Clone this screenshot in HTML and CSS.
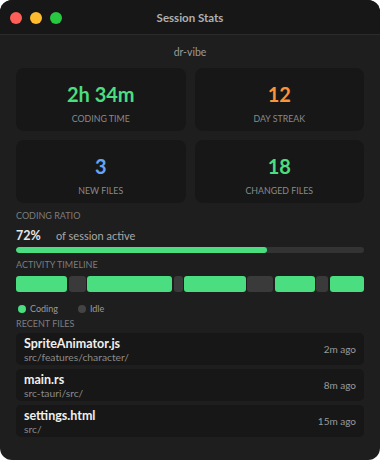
FILE: index.html
```html
<!DOCTYPE html>
<html>
<head>
<meta charset="utf-8">
<link rel="stylesheet" href="styles.css">
</head>
<body>
<div class="window">
  <div class="titlebar">
    <div class="lights">
      <span class="light red"></span>
      <span class="light yellow"></span>
      <span class="light green"></span>
    </div>
    <div class="title">Session Stats</div>
  </div>
  <div class="content">
    <div class="user">dr-vibe</div>
    <div class="cards">
      <div class="card"><div class="value c-green">2h 34m</div><div class="label">Coding Time</div></div>
      <div class="card"><div class="value c-orange">12</div><div class="label">Day Streak</div></div>
      <div class="card"><div class="value c-blue">3</div><div class="label">New Files</div></div>
      <div class="card"><div class="value c-green">18</div><div class="label">Changed Files</div></div>
    </div>
    <div class="section-title st-ratio">Coding Ratio</div>
    <div class="ratio-row"><span class="pct">72%</span><span class="ratio-text">of session active</span></div>
    <div class="progress"><div class="progress-fill" style="width:72%"></div></div>
    <div class="section-title st-timeline">Activity Timeline</div>
    <div class="timeline">
      <div class="seg on" style="flex:51"></div>
      <div class="seg off" style="flex:17"></div>
      <div class="seg on" style="flex:85"></div>
      <div class="seg off" style="flex:9"></div>
      <div class="seg on" style="flex:61"></div>
      <div class="seg off" style="flex:26"></div>
      <div class="seg on" style="flex:40"></div>
      <div class="seg off" style="flex:12"></div>
      <div class="seg on" style="flex:34"></div>
    </div>
    <div class="legend">
      <span class="lg"><span class="dot on"></span>Coding</span>
      <span class="lg"><span class="dot off"></span>Idle</span>
    </div>
    <div class="section-title st-files">Recent Files</div>
    <div class="files">
      <div class="file"><div class="finfo"><div class="fname">SpriteAnimator.js</div><div class="fpath">src/features/character/</div></div><div class="ftime">2m ago</div></div>
      <div class="file"><div class="finfo"><div class="fname">main.rs</div><div class="fpath">src-tauri/src/</div></div><div class="ftime">8m ago</div></div>
      <div class="file"><div class="finfo"><div class="fname">settings.html</div><div class="fpath">src/</div></div><div class="ftime">15m ago</div></div>
    </div>
  </div>
</div>
</body>
</html>
```
FILE: styles.css
```css
* { box-sizing: border-box; }
html, body { margin: 0; padding: 0; background: #ffffff; }
body { font-family: Lato, "Open Sans", sans-serif; width: 380px; height: 460px; overflow: hidden; }
.window {
  width: 380px; height: 460px; background: #1e1e1e;
  border-radius: 12px; overflow: hidden;
  display: flex; flex-direction: column;
}
.titlebar {
  height: 35px; background: #171717; border-bottom: 1px solid #2b2b2b;
  position: relative; display: flex; align-items: center; justify-content: center;
}
.lights { position: absolute; left: 10px; top: 12px; display: flex; gap: 8px; }
.light { width: 12px; height: 12px; border-radius: 50%; display: block; }
.light.red { background: #ff5f57; }
.light.yellow { background: #febc2e; }
.light.green { background: #28c840; }
.title { color: #b0b0b0; font-size: 11.5px; font-weight: 700; }
.content { padding: 6px 16px 0 16px; display: flex; flex-direction: column; }
.user { text-align: center; color: #9a9a9a; font-size: 10.5px; line-height: 22px; margin-bottom: 5px; }
.cards { display: grid; grid-template-columns: 1fr 1fr; gap: 9px 9px; }
.card {
  background: #171717; border-radius: 8px; height: 63px;
  display: flex; flex-direction: column; align-items: center; padding-top: 14px;
}
.value { font-size: 20px; font-weight: 700; line-height: 24px; }
.label { font-size: 8.8px; color: #8a8a8a; text-transform: uppercase; margin-top: 7px; line-height: 12px; }
.c-green { color: #4ade80; }
.c-orange { color: #fb923c; }
.c-blue { color: #60a5fa; }
.section-title { font-size: 9px; color: #7d7d7d; text-transform: uppercase; line-height: 12px; }
.st-ratio { margin-top: 7px; }
.ratio-row { display: flex; align-items: baseline; margin-top: 6px; line-height: 16px; }
.pct { color: #e6e6e6; font-size: 12.5px; font-weight: 700; width: 40px; }
.ratio-text { color: #a8a8a8; font-size: 11px; }
.progress { height: 6px; background: #333333; border-radius: 3px; margin-top: 3px; overflow: hidden; }
.progress-fill { height: 100%; background: #4ade80; border-radius: 3px; }
.st-timeline { margin-top: 6px; }
.timeline { display: flex; gap: 1.5px; height: 16px; margin-top: 5px; }
.seg { border-radius: 3px; }
.seg.on { background: #4ade80; }
.seg.off { background: #3a3a3a; }
.legend { display: flex; gap: 20px; margin-top: 10px; padding-left: 2px; line-height: 14px; }
.lg { display: flex; align-items: center; gap: 4px; font-size: 9px; color: #9a9a9a; }
.dot { width: 8px; height: 8px; border-radius: 50%; display: block; }
.dot.on { background: #4ade80; }
.dot.off { background: #444444; }
.st-files { margin-top: 2px; }
.files { display: flex; flex-direction: column; gap: 4px; margin-top: 3px; }
.file {
  background: #171717; border-radius: 5px; height: 32px;
  display: flex; align-items: center; justify-content: space-between; padding: 0 8px;
}
.finfo { display: flex; flex-direction: column; }
.fname { color: #f0f0f0; font-size: 12.5px; font-weight: 700; line-height: 15px; }
.fpath { color: #8a8a8a; font-size: 10.3px; line-height: 12px; }
.ftime { color: #9a9a9a; font-size: 10px; }
```
